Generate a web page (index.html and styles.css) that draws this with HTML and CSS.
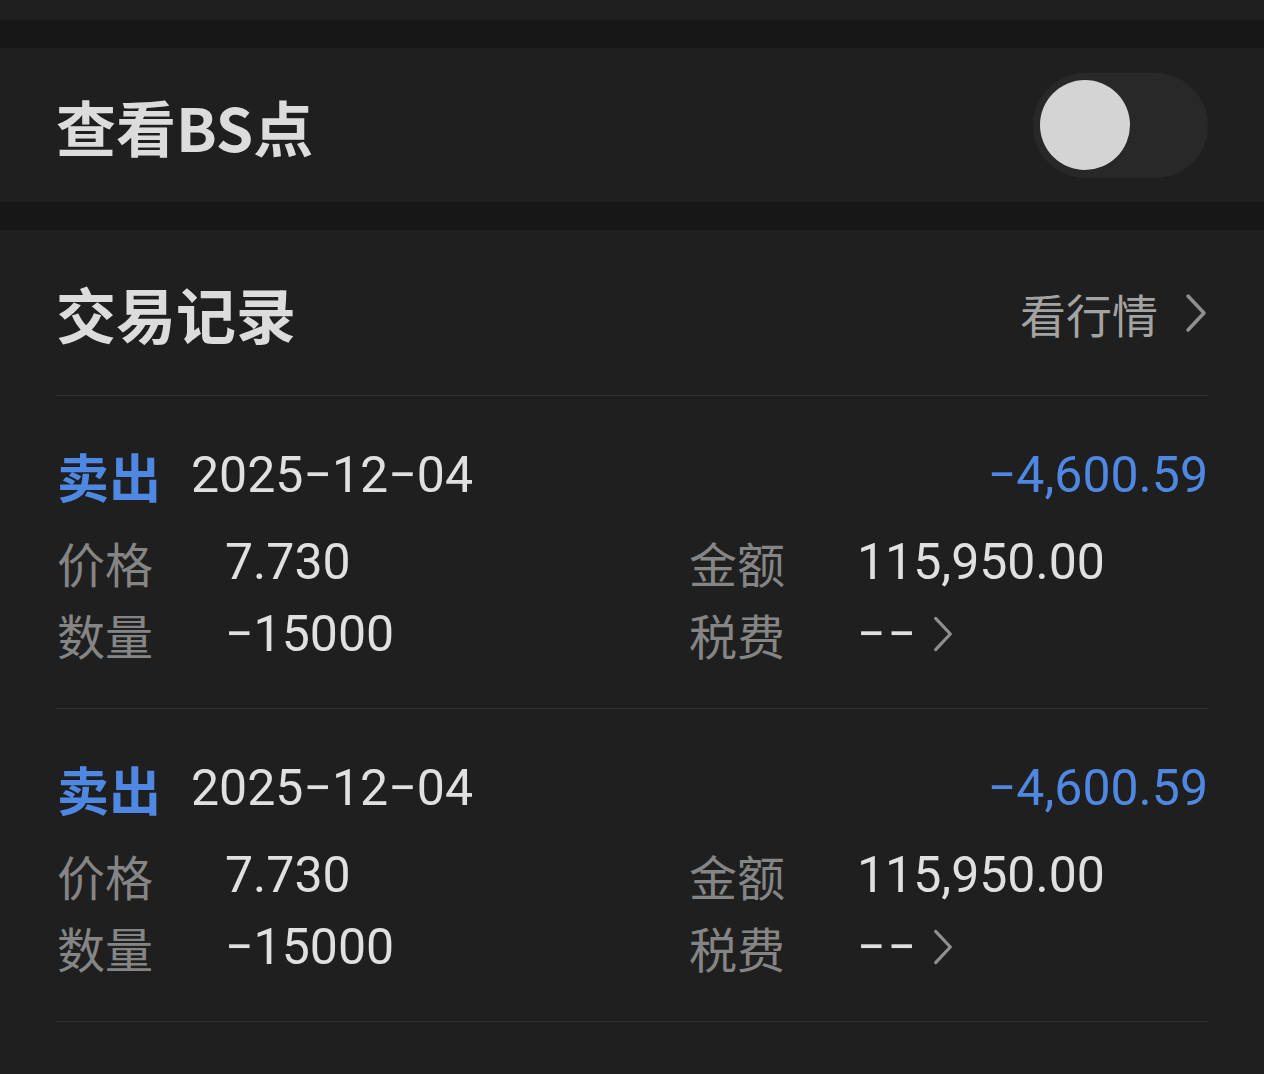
FILE: index.html
```html
<!DOCTYPE html>
<html lang="zh-CN">
<head>
    <meta charset="UTF-8">
    <meta name="viewport" content="width=device-width, initial-scale=1.0">
    <title>交易记录</title>
    <link rel="stylesheet" href="styles.css">
</head>
<body>
    <div class="strip"></div>
    <div class="gap"></div>

    <div class="card bs-row">
        <span class="bs-title">查看BS点</span>
        <div class="switch"><div class="knob"></div></div>
    </div>

    <div class="gap"></div>

    <div class="card records">
        <div class="records-head">
            <span class="records-title">交易记录</span>
            <span class="more">看行情
                <svg class="chev chev-lg" viewBox="0 0 24 40"><path d="M4 3 L20 20 L4 37" /></svg>
            </span>
        </div>

        <div class="trade">
            <div class="trade-top">
                <span class="side">卖出</span>
                <span class="date">2025−12−04</span>
                <span class="pnl">−4,600.59</span>
            </div>
            <div class="meta">
                <span class="label">价格</span><span class="val">7.730</span>
                <span class="label">金额</span><span class="val">115,950.00</span>
                <span class="label">数量</span><span class="val">−15000</span>
                <span class="label">税费</span>
                <span class="val fee">−−<svg class="chev" viewBox="0 0 24 40"><path d="M4 3 L20 20 L4 37" /></svg></span>
            </div>
        </div>

        <div class="trade">
            <div class="trade-top">
                <span class="side">卖出</span>
                <span class="date">2025−12−04</span>
                <span class="pnl">−4,600.59</span>
            </div>
            <div class="meta">
                <span class="label">价格</span><span class="val">7.730</span>
                <span class="label">金额</span><span class="val">115,950.00</span>
                <span class="label">数量</span><span class="val">−15000</span>
                <span class="label">税费</span>
                <span class="val fee">−−<svg class="chev" viewBox="0 0 24 40"><path d="M4 3 L20 20 L4 37" /></svg></span>
            </div>
        </div>
    </div>
</body>
</html>
```

FILE: styles.css
```css
body {
    margin: 0;
    background: #171717;
    font-family: "Noto Sans CJK SC", "Noto Sans", sans-serif;
    color: #e0e0e0;
}
.card {
    background: #1f1f1f;
}
.strip {
    height: 20px;
    background: #1f1f1f;
}
.gap {
    height: 28px;
}
.bs-row {
    height: 154px;
    display: flex;
    align-items: center;
    justify-content: space-between;
    padding: 0 56px 0 56px;
}
.bs-title {
    font-size: 60px;
    font-weight: 700;
    color: #dcdcdc;
}
.switch {
    width: 175px;
    height: 105px;
    border-radius: 53px;
    background: #282828;
    display: flex;
    align-items: center;
    padding-left: 7px;
    box-sizing: border-box;
}
.knob {
    width: 90px;
    height: 90px;
    border-radius: 50%;
    background: #d4d4d4;
}
.records {
    padding: 0 56px;
    min-height: 844px;
}
.records-head {
    height: 165px;
    display: flex;
    align-items: center;
    justify-content: space-between;
    border-bottom: 1px solid #303030;
}
.records-title {
    font-size: 60px;
    font-weight: 700;
    color: #dcdcdc;
}
.more {
    display: flex;
    align-items: center;
    gap: 26px;
    font-size: 46px;
    color: #a3a3a3;
}
.chev {
    width: 22px;
    height: 38px;
    fill: none;
    stroke: #8f8f8f;
    stroke-width: 3.5;
    stroke-linecap: round;
    stroke-linejoin: round;
}
.chev-lg {
    width: 24px;
    height: 40px;
}
.trade {
    height: 262px;
    padding-top: 50px;
    border-bottom: 1px solid #303030;
}
.trade-top {
    height: 58px;
    display: flex;
    align-items: center;
    padding-left: 1px;
}
.side {
    font-size: 52px;
    font-weight: 700;
    color: #4f88e2;
    margin-right: 30px;
}
.date, .pnl, .val {
    font-family: Roboto, "Noto Sans", sans-serif;
    font-size: 50px;
}
.date {
    color: #e0e0e0;
}
.pnl {
    margin-left: auto;
    color: #4f88e2;
}
.meta {
    display: grid;
    grid-template-columns: 168px 464px 168px 1fr;
    grid-auto-rows: 72px;
    align-items: center;
    margin-top: 22px;
    padding-left: 1px;
}
.label {
    font-size: 48px;
    color: #858585;
}
.val {
    color: #e0e0e0;
}
.fee {
    display: flex;
    align-items: center;
    gap: 14px;
    letter-spacing: 2px;
}
```
